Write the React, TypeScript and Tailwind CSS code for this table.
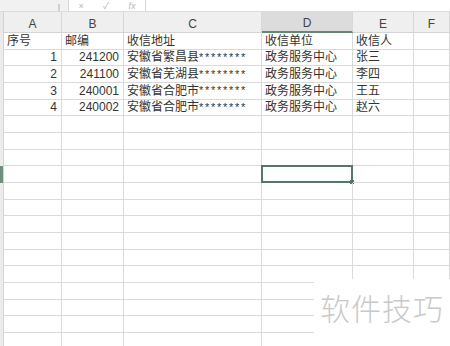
import React from 'react';

const cols = [
    { key: 'A', w: 'w-[58px]' },
    { key: 'B', w: 'w-[62px]' },
    { key: 'C', w: 'w-[138px]' },
    { key: 'D', w: 'w-[91px]' },
    { key: 'E', w: 'w-[61px]' },
    { key: 'F', w: 'w-[36px]' },
];

type Cell = { v: string; right?: boolean; mask?: boolean };

const rows: Cell[][] = [
    [{ v: '序号' }, { v: '邮编' }, { v: '收信地址' }, { v: '收信单位' }, { v: '收信人' }, { v: '' }],
    [{ v: '1', right: true }, { v: '241200', right: true }, { v: '安徽省繁昌县', mask: true }, { v: '政务服务中心' }, { v: '张三' }, { v: '' }],
    [{ v: '2', right: true }, { v: '241100', right: true }, { v: '安徽省芜湖县', mask: true }, { v: '政务服务中心' }, { v: '李四' }, { v: '' }],
    [{ v: '3', right: true }, { v: '240001', right: true }, { v: '安徽省合肥市', mask: true }, { v: '政务服务中心' }, { v: '王五' }, { v: '' }],
    [{ v: '4', right: true }, { v: '240002', right: true }, { v: '安徽省合肥市', mask: true }, { v: '政务服务中心' }, { v: '赵六' }, { v: '' }],
];

const TOTAL_ROWS = 19;
const SELECTED_ROW = 8;

const App = () => {
    return (
        <div className="w-[450px] h-[346px] overflow-hidden relative bg-white text-[12px] text-[#333] font-['Liberation_Sans','Noto_Sans_CJK_SC',sans-serif]">
            {/* formula bar strip */}
            <div className="h-[12px] flex bg-[#f1f1f1] border-b border-[#dcdcdc]">
                <div className="w-[68px] flex justify-end items-end pr-[8px]">
                    <div className="w-[2px] h-[7px] bg-[#cfcfcf]"></div>
                </div>
                <div className="w-[78px] bg-white border-x border-[#d6d6d6] flex items-center justify-around text-[9px] leading-[10px] text-[#b8b8b8]">
                    <span>×</span>
                    <span>✓</span>
                    <span className="italic">fx</span>
                </div>
                <div className="flex-1 bg-white"></div>
            </div>

            {/* column headers */}
            <div className="flex h-[21px] bg-[#efefef]">
                <div className="w-[4px] border-r border-[#d4d4d4] bg-[#e8e8e8]"></div>
                {cols.map((c) => (
                    <div
                        key={c.key}
                        className={`${c.w} shrink-0 flex items-center justify-center border-r border-[#d8d8d8] ${c.key === 'D' ? 'bg-[#dcdcdc] border-b-2 border-b-[#5f8a70]' : 'border-b border-b-[#d4d4d4]'} text-[#444] pt-[3px]`}
                    >
                        {c.key}
                    </div>
                ))}
            </div>

            {/* grid rows */}
            {Array.from({ length: TOTAL_ROWS }).map((_, r) => {
                const data = rows[r];
                return (
                    <div key={r} className="flex h-[16.67px]">
                        <div className={`w-[4px] shrink-0 border-r border-[#d4d4d4] ${r === SELECTED_ROW ? 'bg-[#6f8f7c]' : 'bg-[#ececec]'}`}></div>
                        {cols.map((c, ci) => {
                            const cell: Cell = data ? data[ci] : { v: '' };
                            const selected = r === SELECTED_ROW && c.key === 'D';
                            return (
                                <div
                                    key={c.key}
                                    className={`${c.w} shrink-0 relative flex items-center border-r border-b border-[#dadada] whitespace-nowrap leading-none ${cell.right ? 'justify-end pr-[4px]' : 'pl-[3px]'}`}
                                >
                                    {cell.v}
                                    {cell.mask && <span className="tracking-[1.7px] text-[11px]">********</span>}
                                    {selected && (
                                        <div className="absolute -left-[1px] -top-[1px] -right-[1px] -bottom-[1px] border-2 border-[#587665] bg-[#fbfffd]">
                                            <div className="absolute -right-[3px] -bottom-[3px] w-[4px] h-[4px] bg-[#587665]"></div>
                                        </div>
                                    )}
                                </div>
                            );
                        })}
                    </div>
                );
            })}

            {/* watermark */}
            <div className="absolute left-[314px] top-[279px] w-[136px] h-[67px] bg-white flex items-start justify-center pt-[13px]">
                <span className="text-[30px] leading-none tracking-[1px] text-[#c9c9c9] font-['Noto_Sans_CJK_SC',sans-serif] font-light">软件技巧</span>
            </div>
        </div>
    );
};

export default App;
